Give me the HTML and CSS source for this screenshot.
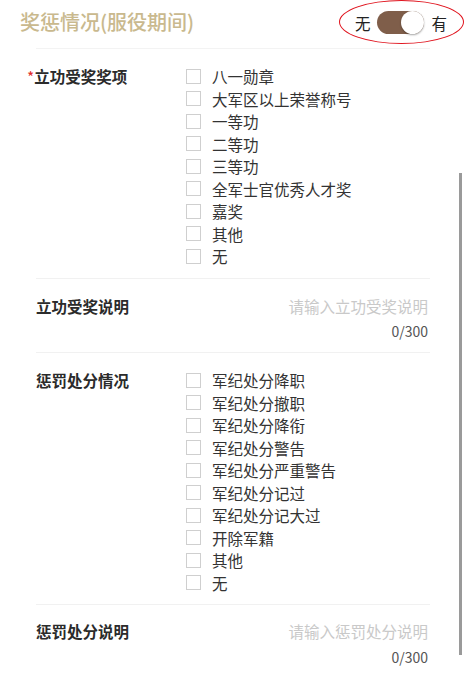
FILE: index.html
```html
<!DOCTYPE html>
<html lang="zh-CN">
<head>
  <meta charset="UTF-8" />
  <meta name="viewport" content="width=device-width, initial-scale=1" />
  <title>奖惩情况</title>
  <link rel="stylesheet" href="styles.css">
</head>
<body>

  <div class="header">
    <h2 class="title">奖惩情况(服役期间)</h2>
    <div class="toggle">
      <span>无</span>
      <div class="switch"><div class="knob"></div></div>
      <span>有</span>
      <div class="ring"></div>
    </div>
  </div>

  <div class="form">
    <div class="row row-list">
      <div class="label"><span class="req">*</span>立功受奖奖项</div>
      <div class="options">
        <label class="opt"><span class="box"></span>八一勋章</label>
        <label class="opt"><span class="box"></span>大军区以上荣誉称号</label>
        <label class="opt"><span class="box"></span>一等功</label>
        <label class="opt"><span class="box"></span>二等功</label>
        <label class="opt"><span class="box"></span>三等功</label>
        <label class="opt"><span class="box"></span>全军士官优秀人才奖</label>
        <label class="opt"><span class="box"></span>嘉奖</label>
        <label class="opt"><span class="box"></span>其他</label>
        <label class="opt"><span class="box"></span>无</label>
      </div>
    </div>

    <div class="row row-text">
      <div class="text-line">
        <div class="label">立功受奖说明</div>
        <div class="placeholder">请输入立功受奖说明</div>
      </div>
      <div class="count">0/300</div>
    </div>

    <div class="row row-list">
      <div class="label">惩罚处分情况</div>
      <div class="options">
        <label class="opt"><span class="box"></span>军纪处分降职</label>
        <label class="opt"><span class="box"></span>军纪处分撤职</label>
        <label class="opt"><span class="box"></span>军纪处分降衔</label>
        <label class="opt"><span class="box"></span>军纪处分警告</label>
        <label class="opt"><span class="box"></span>军纪处分严重警告</label>
        <label class="opt"><span class="box"></span>军纪处分记过</label>
        <label class="opt"><span class="box"></span>军纪处分记大过</label>
        <label class="opt"><span class="box"></span>开除军籍</label>
        <label class="opt"><span class="box"></span>其他</label>
        <label class="opt"><span class="box"></span>无</label>
      </div>
    </div>

    <div class="row row-text last">
      <div class="text-line">
        <div class="label">惩罚处分说明</div>
        <div class="placeholder">请输入惩罚处分说明</div>
      </div>
      <div class="count">0/300</div>
    </div>
  </div>

  <div class="scrollbar"></div>

</body>
</html>
```

FILE: styles.css
```css
body {
  margin: 0;
  background: #fff;
  color: #333;
  font-family: "Noto Sans CJK SC", "Noto Sans", sans-serif;
  position: relative;
  height: 682px;
  overflow: hidden;
}

.header {
  display: flex;
  align-items: center;
  justify-content: space-between;
  height: 44px;
  padding: 0 19px 0 20px;
  position: relative;
}

.title {
  margin: 0;
  font-size: 20px;
  font-weight: 500;
  color: #c9b98e;
  line-height: 44px;
}

.toggle {
  display: flex;
  align-items: center;
  gap: 7px;
  font-size: 15.5px;
  color: #222;
  position: relative;
  padding-top: 1px;
}

.switch {
  width: 47px;
  height: 23px;
  border-radius: 12px;
  background: #7f5e4a;
  display: flex;
  align-items: center;
  justify-content: flex-end;
}

.knob {
  width: 23px;
  height: 23px;
  border-radius: 50%;
  background: #fff;
  box-shadow: 0 1px 2px rgba(0, 0, 0, 0.35);
}

.ring {
  position: absolute;
  left: -16px;
  top: -10px;
  width: 123px;
  height: 42px;
  border: 1.5px solid #e0141e;
  border-radius: 50%;
}

.form {
  margin: 4px 36px 0 36px;
  border-top: 1px solid #f3f3f3;
}

.row {
  border-bottom: 1px solid #f1f1f1;
}

.row-list {
  display: flex;
  padding: 16px 0 10px;
}

.row-text + .row-list {
  padding-top: 16px;
}

.label {
  width: 150px;
  flex-shrink: 0;
  font-size: 15.5px;
  font-weight: bold;
  line-height: 22.5px;
  color: #2b2b2b;
}

.req {
  color: #e02a2a;
  margin-left: -9px;
  font-weight: normal;
}

.options {
  display: flex;
  flex-direction: column;
}

.opt {
  display: flex;
  align-items: center;
  height: 22.5px;
  font-size: 15.5px;
  color: #333;
}

.box {
  width: 13px;
  height: 13px;
  border: 1px solid #cfcfcf;
  margin-right: 11px;
}

.row-text {
  padding: 16px 2px 10px 0;
}

.text-line {
  display: flex;
  justify-content: space-between;
}

.placeholder {
  font-size: 15.5px;
  line-height: 22.5px;
  color: #c9c9c9;
}

.count {
  text-align: right;
  font-size: 14px;
  line-height: 22px;
  color: #555;
  margin-top: 3px;
}

.last {
  border-bottom: none;
  padding-top: 15px;
}

.scrollbar {
  position: absolute;
  left: 459px;
  top: 173px;
  width: 3px;
  height: 482px;
  background: #9a9a9a;
}
```
